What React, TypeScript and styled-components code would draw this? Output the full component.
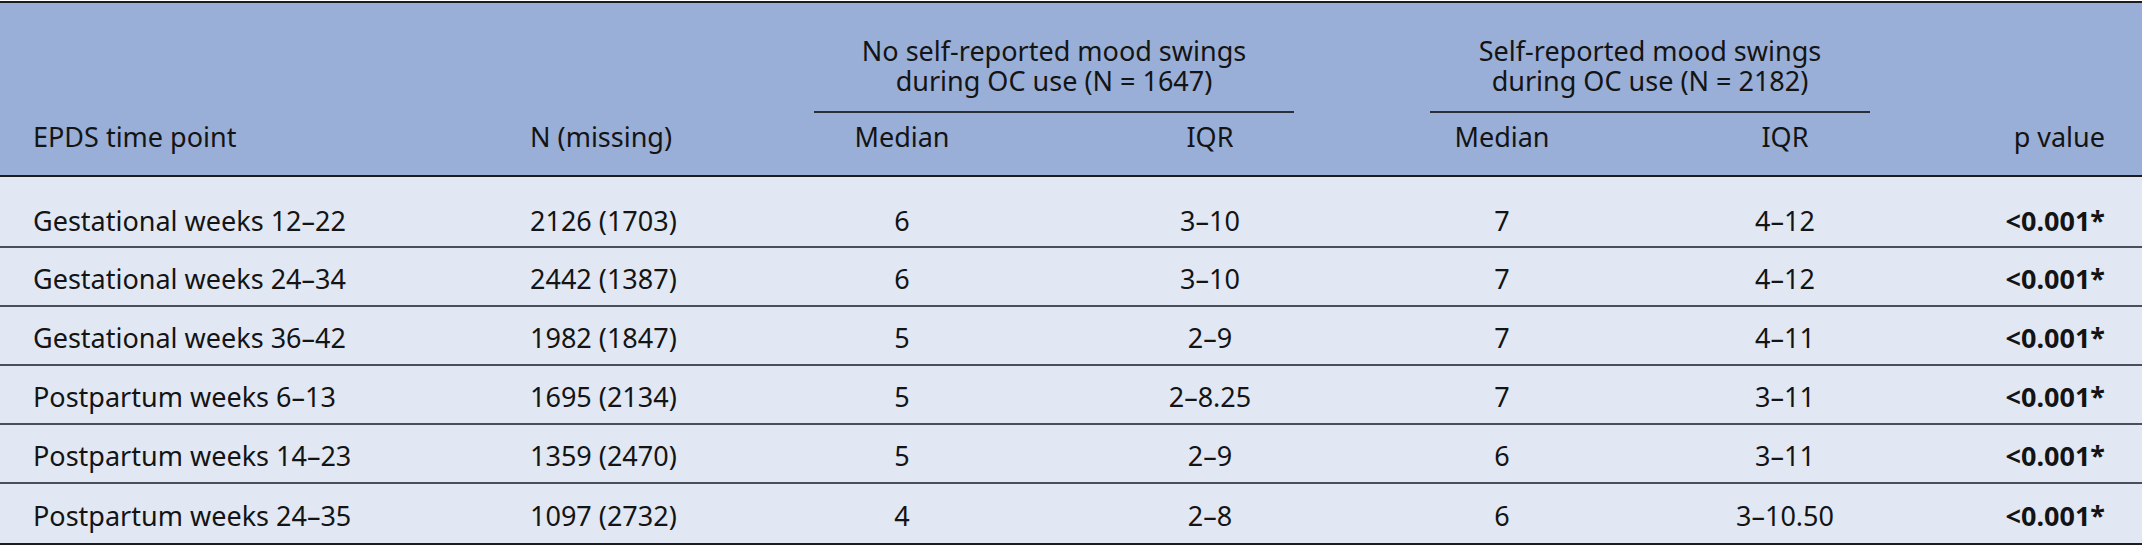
import React from "react";
import styled, { createGlobalStyle, css } from "styled-components";

const GlobalStyle = createGlobalStyle`
  html, body { margin: 0; padding: 0; background: #ffffff; }
  body { font-family: "Noto Sans", "Open Sans", sans-serif; color: #141414; }
`;

const COLS = "528px 286px 176px 440px 144px 422px 146px";

type Align = "left" | "center" | "right";

const alignCss = (a: Align) => css`
  justify-content: ${a === "left" ? "flex-start" : a === "right" ? "flex-end" : "center"};
  text-align: ${a};
`;

const Page = styled.div`
  width: 2142px;
  padding-top: 1px;
`;

const Table = styled.div`
  border-top: 2px solid #1c1c1c;
  border-bottom: 2px solid #1c1c1c;
  font-size: 27px;
  font-stretch: semi-condensed;
  line-height: 30px;
`;

const Header = styled.div`
  display: grid;
  grid-template-columns: ${COLS};
  grid-template-rows: 110px 62px;
  background: #99afd7;
  border-bottom: 2px solid #1c1c1c;
`;

const HeadCell = styled.div<{ $col: string; $row: string; $align: Align; $padL?: number; $padR?: number }>`
  grid-column: ${(p) => p.$col};
  grid-row: ${(p) => p.$row};
  display: flex;
  align-items: flex-end;
  ${(p) => alignCss(p.$align)};
  padding: 0 ${(p) => p.$padR ?? 0}px 23px ${(p) => p.$padL ?? 0}px;
  white-space: nowrap;
`;

const SubHeadCell = styled.div<{ $col: number }>`
  grid-column: ${(p) => p.$col};
  grid-row: 2;
  display: flex;
  justify-content: center;
  align-items: flex-start;
  padding-top: 9px;
`;

const GroupCell = styled.div<{ $col: string }>`
  grid-column: ${(p) => p.$col};
  grid-row: 1;
  display: flex;
  align-items: flex-end;
`;

const GroupTitle = styled.div<{ $width: number }>`
  width: ${(p) => p.$width}px;
  text-align: center;
  padding-bottom: 15px;
  border-bottom: 2px solid #2a2f3a;
`;

const TitleLine = styled.span`
  display: block;
  height: 30px;
`;

const Row = styled.div<{ $first?: boolean; $last?: boolean }>`
  display: grid;
  grid-template-columns: ${COLS};
  box-sizing: border-box;
  height: ${(p) => (p.$first ? 71 : 59)}px;
  padding-top: ${(p) => (p.$first ? 18 : 4)}px;
  background: #e1e8f4;
  border-bottom: ${(p) => (p.$last ? "none" : "2px solid #4b4f57")};
`;

const Cell = styled.div<{ $align: Align; $padL?: number; $padR?: number; $bold?: boolean }>`
  display: flex;
  align-items: center;
  ${(p) => alignCss(p.$align)};
  padding-left: ${(p) => p.$padL ?? 0}px;
  padding-right: ${(p) => p.$padR ?? 0}px;
  font-weight: ${(p) => (p.$bold ? 700 : 400)};
  white-space: nowrap;
`;

type RowData = {
  point: string;
  n: string;
  med1: string;
  iqr1: string;
  med2: string;
  iqr2: string;
  p: string;
};

const rows: RowData[] = [
  { point: "Gestational weeks 12–22", n: "2126 (1703)", med1: "6", iqr1: "3–10", med2: "7", iqr2: "4–12", p: "<0.001*" },
  { point: "Gestational weeks 24–34", n: "2442 (1387)", med1: "6", iqr1: "3–10", med2: "7", iqr2: "4–12", p: "<0.001*" },
  { point: "Gestational weeks 36–42", n: "1982 (1847)", med1: "5", iqr1: "2–9", med2: "7", iqr2: "4–11", p: "<0.001*" },
  { point: "Postpartum weeks 6–13", n: "1695 (2134)", med1: "5", iqr1: "2–8.25", med2: "7", iqr2: "3–11", p: "<0.001*" },
  { point: "Postpartum weeks 14–23", n: "1359 (2470)", med1: "5", iqr1: "2–9", med2: "6", iqr2: "3–11", p: "<0.001*" },
  { point: "Postpartum weeks 24–35", n: "1097 (2732)", med1: "4", iqr1: "2–8", med2: "6", iqr2: "3–10.50", p: "<0.001*" },
];

export default function App() {
  return (
    <Page>
      <GlobalStyle />
      <Table>
        <Header>
          <HeadCell $col="1" $row="1 / span 2" $align="left" $padL={33}>
            EPDS time point
          </HeadCell>
          <HeadCell $col="2" $row="1 / span 2" $align="left" $padL={2}>
            N (missing)
          </HeadCell>
          <GroupCell $col="3 / span 2">
            <GroupTitle $width={480}>
              <TitleLine>No self-reported mood swings</TitleLine>
              <TitleLine>during OC use (N = 1647)</TitleLine>
            </GroupTitle>
          </GroupCell>
          <GroupCell $col="5 / span 2">
            <GroupTitle $width={440}>
              <TitleLine>Self-reported mood swings</TitleLine>
              <TitleLine>during OC use (N = 2182)</TitleLine>
            </GroupTitle>
          </GroupCell>
          <HeadCell $col="7" $row="1 / span 2" $align="right" $padR={37}>
            p value
          </HeadCell>
          <SubHeadCell $col={3}>Median</SubHeadCell>
          <SubHeadCell $col={4}>IQR</SubHeadCell>
          <SubHeadCell $col={5}>Median</SubHeadCell>
          <SubHeadCell $col={6}>IQR</SubHeadCell>
        </Header>
        {rows.map((r, i) => (
          <Row key={r.point} $first={i === 0} $last={i === rows.length - 1}>
            <Cell $align="left" $padL={33}>{r.point}</Cell>
            <Cell $align="left" $padL={2}>{r.n}</Cell>
            <Cell $align="center">{r.med1}</Cell>
            <Cell $align="center">{r.iqr1}</Cell>
            <Cell $align="center">{r.med2}</Cell>
            <Cell $align="center">{r.iqr2}</Cell>
            <Cell $align="right" $padR={37} $bold>{r.p}</Cell>
          </Row>
        ))}
      </Table>
    </Page>
  );
}
